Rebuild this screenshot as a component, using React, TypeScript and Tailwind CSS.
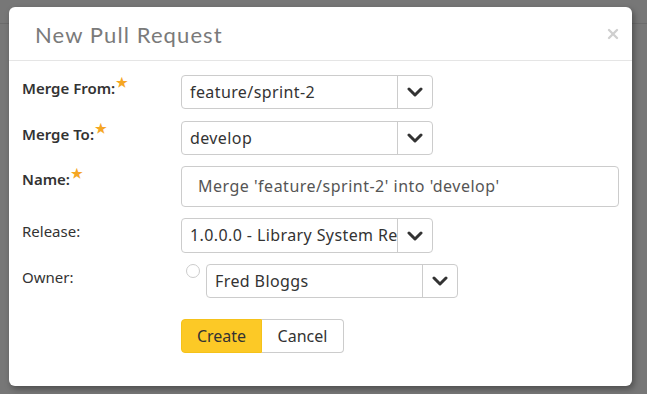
import { X } from "lucide-react";

const font = { fontFamily: '"Noto Sans", "Open Sans", sans-serif' };

const Chevron = () => (
  <svg width="16" height="10" viewBox="0 0 16 10" fill="none">
    <polyline points="2,2 8,8 14,2" stroke="#333" strokeWidth="3" strokeLinecap="round" strokeLinejoin="round" />
  </svg>
);

const Select = ({ value, className }: { value: string; className?: string }) => (
  <div className={`flex h-[34px] w-[252px] rounded border border-[#cccccc] bg-white ${className ?? ""}`}>
    <div className="flex-1 overflow-hidden whitespace-nowrap pl-[8px] text-[16px] leading-[32px] tracking-[0.4px] text-[#333]">{value}</div>
    <div className="flex w-[35px] items-center justify-center border-l border-[#cccccc]">
      <Chevron />
    </div>
  </div>
);

const Label = ({ text, required, bold }: { text: string; required?: boolean; bold?: boolean }) => (
  <div className={`w-[159px] shrink-0 pt-[3px] text-[15px] leading-5 text-[#333] ${bold ? "font-semibold" : ""}`}>
    {text}
    {required && <span className="relative -top-[7px] ml-[1px] text-[13px] text-[#f5a623]">★</span>}
  </div>
);

export default function App() {
  return (
    <div className="relative h-[394px] w-[647px] overflow-hidden bg-[#777777]" style={font}>
      <div className="h-[24px] border-b border-[#6b6b6b]" />
      <div className="absolute left-[9px] top-[7px] h-[379px] w-[623px] rounded-md bg-white shadow-[2px_3px_6px_rgba(0,0,0,0.35)]">
        <div className="flex h-[54px] items-center justify-between border-b border-[#e5e5e5] pl-[26px] pr-[11px]">
          <h2 className="pt-[1px] text-[22px] tracking-[1.1px] text-[#7a7a7a]" style={{ fontFamily: "Lato, sans-serif" }}>
            New Pull Request
          </h2>
          <X size={16} strokeWidth={3.5} className="text-[#cfcfcf]" />
        </div>
        <div className="flex flex-col pl-[13px] pt-[14px]">
          <div className="flex">
            <Label text="Merge From:" required bold />
            <Select value="feature/sprint-2" />
          </div>
          <div className="mt-[12px] flex">
            <Label text="Merge To:" required bold />
            <Select value="develop" />
          </div>
          <div className="mt-[11px] flex">
            <Label text="Name:" required bold />
            <div className="h-[41px] w-[438px] rounded border border-[#cccccc] pl-[16px] text-[16px] leading-[39px] tracking-[0.5px] text-[#555]">
              Merge 'feature/sprint-2' into 'develop'
            </div>
          </div>
          <div className="mt-[11px] flex">
            <Label text="Release:" />
            <Select value="1.0.0.0 - Library System Release 1" className="h-[35px]" />
          </div>
          <div className="mt-[11px] flex">
            <Label text="Owner:" />
            <div className="ml-[5px] mr-[6px] mt-[0px] h-[14px] w-[14px] rounded-full border border-[#cccccc]" />
            <Select value="Fred Bloggs" />
          </div>
          <div className="mt-[21px] flex pl-[159px]">
            <button className="h-[34px] w-[81px] rounded-l border border-[#f5c21a] bg-[#fcc926] text-[16px] text-[#333]">Create</button>
            <button className="h-[34px] w-[82px] rounded-r border border-l-0 border-[#cccccc] bg-white text-[16px] text-[#333]">Cancel</button>
          </div>
        </div>
      </div>
    </div>
  );
}
